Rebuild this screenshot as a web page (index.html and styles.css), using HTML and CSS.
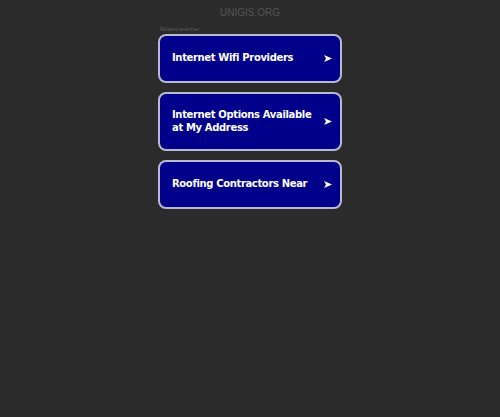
FILE: index.html
```html
<!DOCTYPE html>
<html lang="en">
<head>
<meta charset="utf-8">
<title>unigis.org</title>
<link rel="stylesheet" href="styles.css">
</head>
<body>
<header class="site-header">UNIGIS.ORG</header>
<main class="results">
  <div class="results-label">Related searches</div>
  <ul class="link-list">
    <li><a class="link-box" href="#"><span class="link-text">Internet Wifi Providers</span><svg class="arrow" viewBox="0 0 8 7" width="8" height="7"><polygon points="0,0 8,3.5 0,7 2,3.5"/></svg></a></li>
    <li><a class="link-box" href="#"><span class="link-text">Internet Options Available at My Address</span><svg class="arrow" viewBox="0 0 8 7" width="8" height="7"><polygon points="0,0 8,3.5 0,7 2,3.5"/></svg></a></li>
    <li><a class="link-box" href="#"><span class="link-text">Roofing Contractors Near</span><svg class="arrow" viewBox="0 0 8 7" width="8" height="7"><polygon points="0,0 8,3.5 0,7 2,3.5"/></svg></a></li>
  </ul>
</main>
</body>
</html>
```
FILE: styles.css
```css
html, body {
  margin: 0;
  padding: 0;
  background: #2b2b2b;
  height: 100%;
}
body {
  font-family: "Liberation Sans", Arial, sans-serif;
}
.site-header {
  text-align: center;
  color: #555555;
  font-size: 10px;
  line-height: 12px;
  padding-top: 7px;
  height: 13px;
}
.results {
  width: 184px;
  margin: 0 auto;
}
.results-label {
  color: #5c5c5c;
  font-size: 5px;
  line-height: 6px;
  padding: 6px 0 2px 2px;
}
.link-list {
  list-style: none;
  margin: 0;
  padding: 0;
  display: flex;
  flex-direction: column;
  gap: 9px;
}
.link-box {
  box-sizing: border-box;
  display: flex;
  align-items: center;
  justify-content: space-between;
  min-height: 49px;
  padding: 15px 8px 15px 12px;
  border: 2px solid #b9b9d2;
  border-radius: 8px;
  background: #00008a;
  color: #ffffff;
  text-decoration: none;
}
.link-text {
  font-family: "DejaVu Sans", Verdana, sans-serif;
  font-weight: bold;
  font-size: 10px;
  letter-spacing: -0.35px;
  line-height: 12.5px;
  max-width: 145px;
}
.arrow {
  fill: #ffffff;
  flex: none;
}
```
